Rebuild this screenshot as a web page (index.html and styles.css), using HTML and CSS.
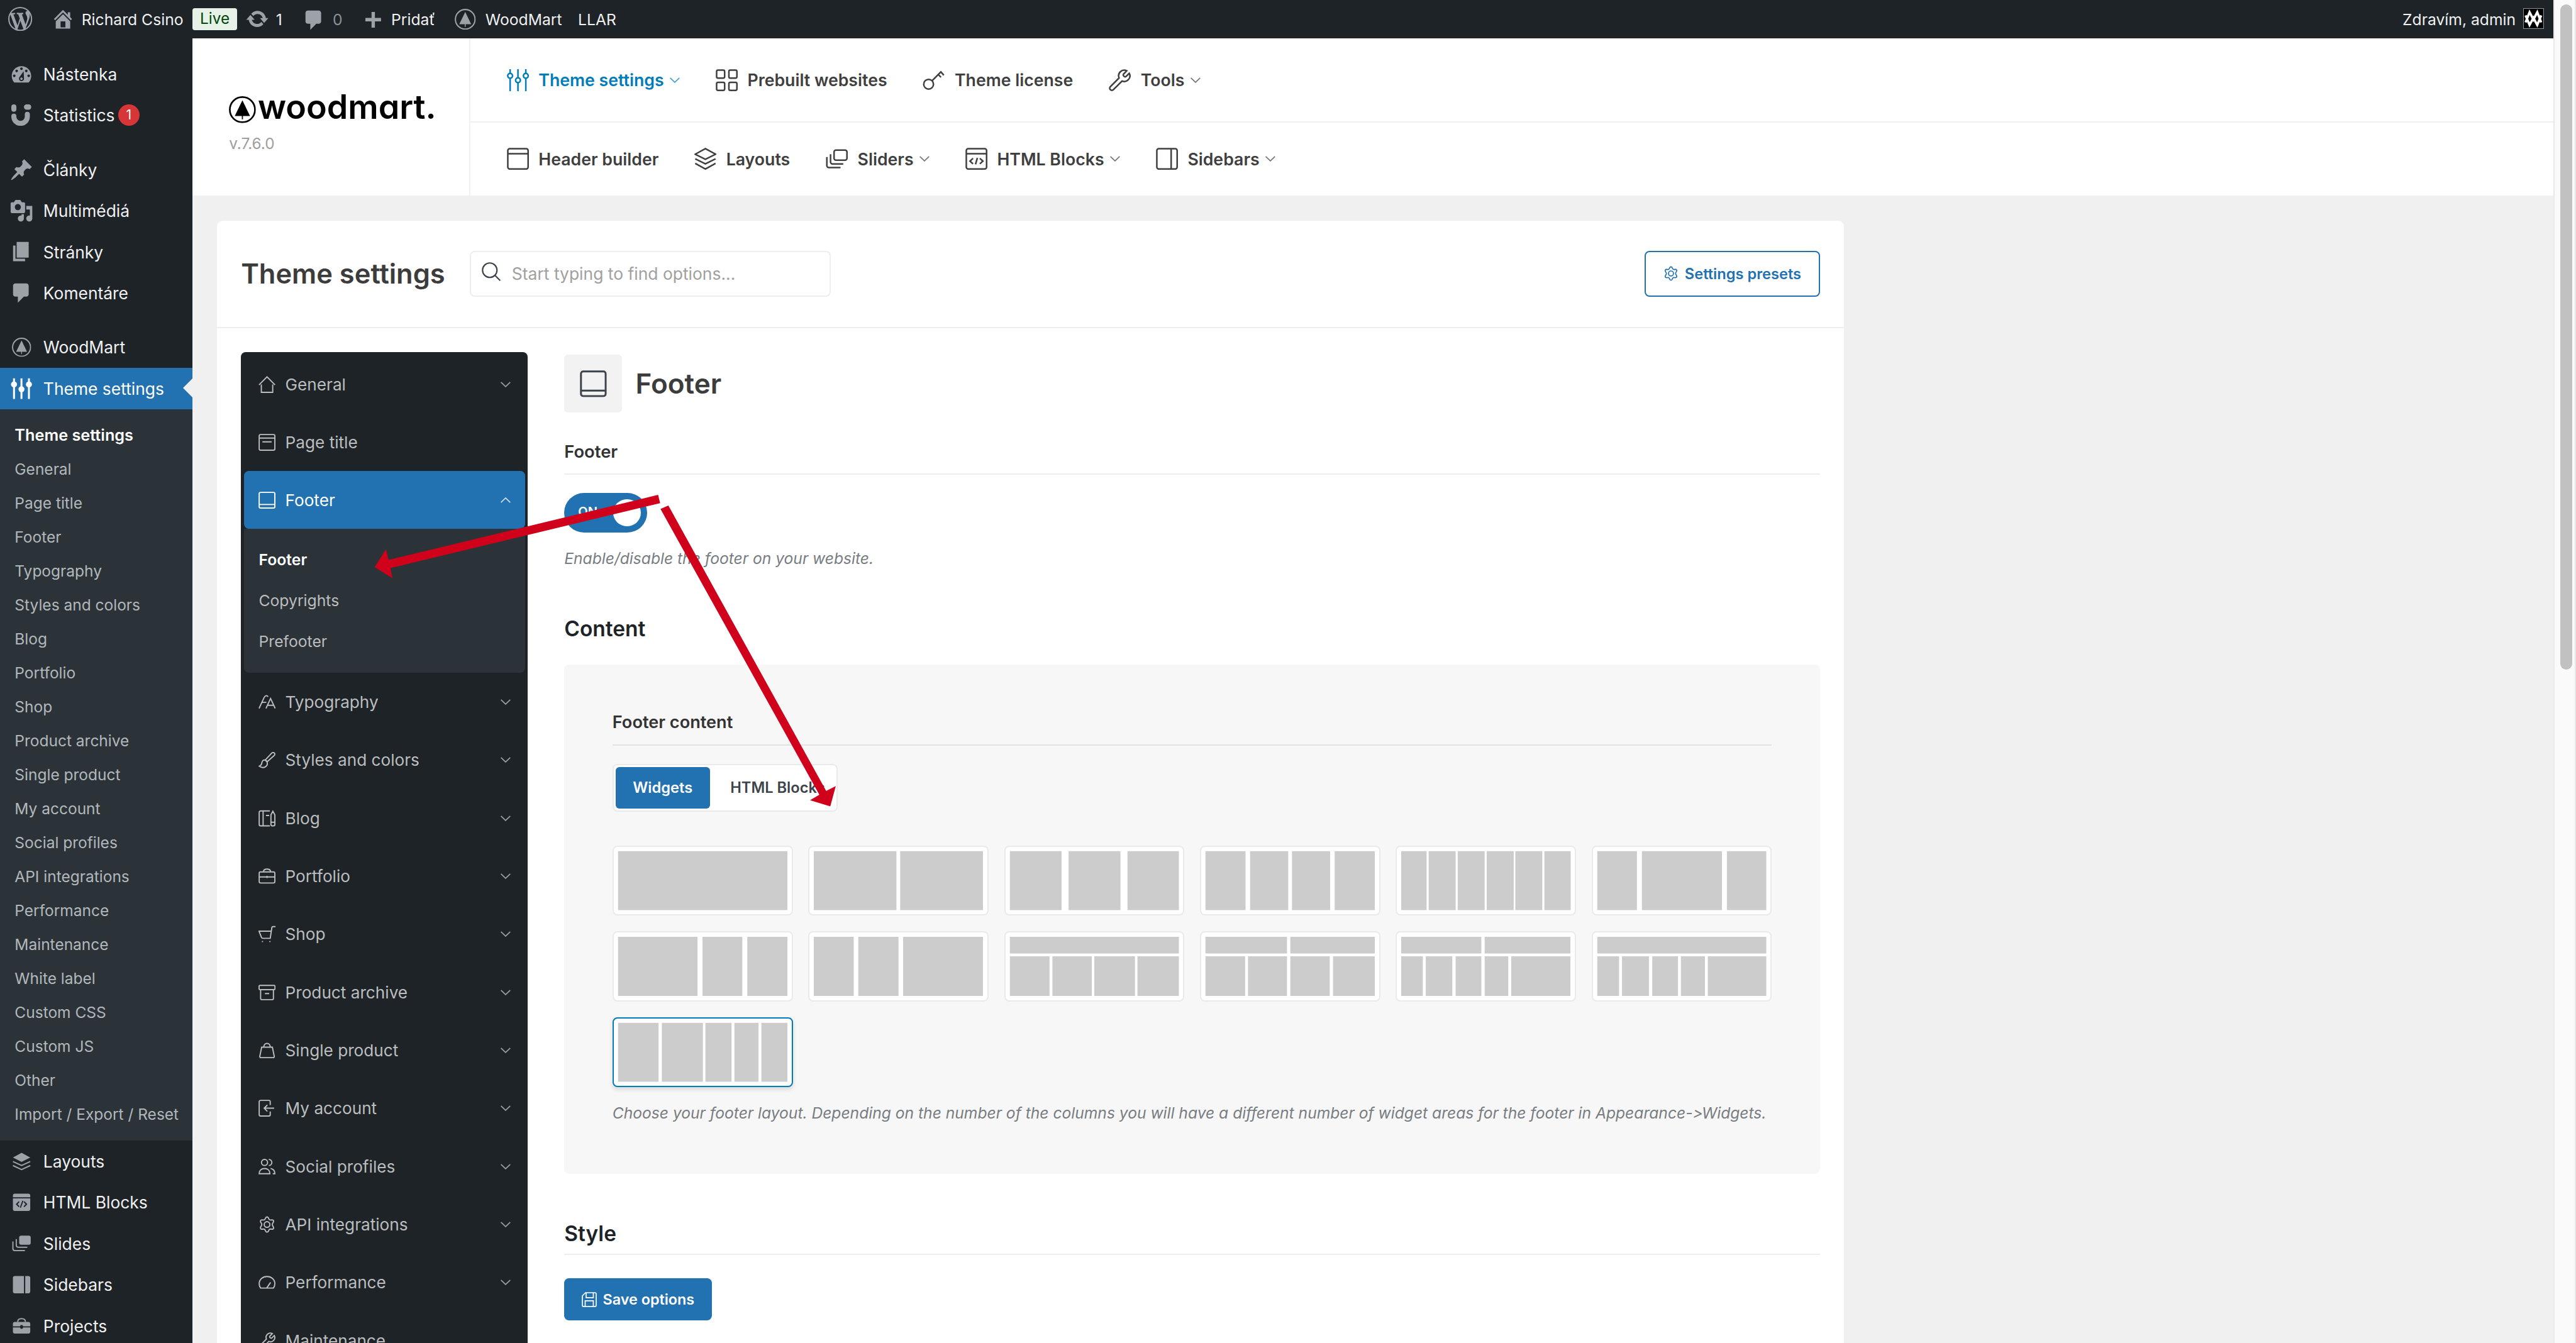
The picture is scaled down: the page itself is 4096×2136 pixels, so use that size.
FILE: index.html
```
<!DOCTYPE html>
<html lang="sk">
<head>
  <meta charset="UTF-8" />
  <meta name="viewport" content="width=device-width, initial-scale=1.0"/>
  <title>Theme settings</title>
  <link rel="stylesheet" href="styles.css">
</head>
<body>
  <!-- icons -->
  <svg class="sprite">
    <symbol id="i-wp" viewBox="0 0 20 20"><path d="M20 10c0-5.51-4.49-10-10-10C4.48 0 0 4.49 0 10c0 5.52 4.48 10 10 10 5.51 0 10-4.48 10-10zM7.78 15.37L4.37 6.22c.55-.02 1.17-.08 1.17-.08.5-.06.44-1.13-.06-1.11 0 0-1.45.11-2.37.11-.18 0-.37 0-.58-.01C4.12 2.69 6.87 1.11 10 1.11c2.33 0 4.45.87 6.05 2.34-.68-.11-1.65.39-1.65 1.58 0 .74.45 1.36.9 2.1.35.61.55 1.36.55 2.46 0 1.49-1.4 5-1.4 5l-3.03-8.37c.54-.02.82-.17.82-.17.5-.05.44-1.25-.06-1.22 0 0-1.44.12-2.38.12-.87 0-2.33-.12-2.33-.12-.5-.03-.56 1.2-.06 1.22l.92.08 1.26 3.41zM17.41 10c.24-.64.74-1.87.43-4.25.7 1.29 1.05 2.71 1.05 4.25 0 3.29-1.73 6.24-4.4 7.78.97-2.59 1.94-5.2 2.92-7.78zM6.1 18.09C3.12 16.65 1.11 13.53 1.11 10c0-1.3.23-2.48.72-3.59C3.25 10.3 4.67 14.2 6.1 18.09zm4.03-6.63l2.58 6.98c-.86.29-1.76.45-2.71.45-.79 0-1.57-.11-2.29-.33.81-2.38 1.62-4.74 2.42-7.1z"/></symbol>
    <symbol id="i-home" viewBox="0 0 20 20"><path d="M16 8.5l1.53 1.53-1.06 1.06L10 4.6l-6.47 6.49-1.06-1.06L10 2.5l4 4v-2h2v4zm-6-2.46l6 5.99V18H4v-5.97zM12 17v-5H8v5h4z"/></symbol>
    <symbol id="i-update" viewBox="0 0 20 20"><path d="M10.2 3.28c3.53 0 6.43 2.61 6.92 6h2.08l-3.5 4-3.5-4h2.32c-.45-1.97-2.21-3.45-4.32-3.45-1.45 0-2.73.71-3.54 1.78L4.95 5.66C6.23 4.2 8.11 3.28 10.2 3.28zm-.4 13.44c-3.52 0-6.43-2.61-6.92-6H.8l3.5-4c1.17 1.33 2.33 2.67 3.5 4H5.48c.45 1.97 2.21 3.45 4.32 3.45 1.45 0 2.73-.71 3.54-1.78l1.71 1.95c-1.28 1.46-3.15 2.38-5.25 2.38z"/></symbol>
    <symbol id="i-comment" viewBox="0 0 20 20"><path d="M5 2h9c1.1 0 2 .9 2 2v7c0 1.1-.9 2-2 2h-2l-5 5v-5H5c-1.1 0-2-.9-2-2V4c0-1.1.9-2 2-2z"/></symbol>
    <symbol id="i-plus" viewBox="0 0 13 13"><path d="M5.1 0h2.8v4.9H13v2.9H7.9V13H5.1V7.8H0V4.9h5.1z"/></symbol>
    <symbol id="i-tree" viewBox="0 0 24 24"><circle cx="12" cy="12" r="11.2" fill="none" stroke="currentColor" stroke-width="1.5"/><path d="M12 3.6l6.8 14h-6.3v3h-1v-3H5.2z"/></symbol>
    <symbol id="i-dashboard" viewBox="0 0 20 20"><path fill-rule="evenodd" d="M4 16.9h12a9 9 0 0 0 2.1-5.4C18.1 6.8 14.5 3.3 10 3.3S1.9 6.8 1.9 11.5A9 9 0 0 0 4 16.9zM10 4.3a1.1 1.1 0 1 1 0 2.2 1.1 1.1 0 0 1 0-2.2zM6 6.1a1.1 1.1 0 1 1 0 2.2 1.1 1.1 0 0 1 0-2.2zM14 6.1a1.1 1.1 0 1 1 0 2.2 1.1 1.1 0 0 1 0-2.2zM4 10.2a1.1 1.1 0 1 1 0 2.2 1.1 1.1 0 0 1 0-2.2zM16 10.2a1.1 1.1 0 1 1 0 2.2 1.1 1.1 0 0 1 0-2.2zM11.800 7.500l.3 5.800a2.100 2.100 0 1 1-3.900-.7zM10 12.700a1 1 0 1 0 0 2 1 1 0 0 0 0-2z"/></symbol>
    <symbol id="i-stats" viewBox="0 0 16.6 18"><rect width="4.2" height="6.2" rx="2.1"/><rect x="10.5" width="6.1" height="4.4" rx="2.2"/><path d="M2.1 9.8v.4a5.600 5.600 0 0 0 11.200 0V8.200" fill="none" stroke="currentColor" stroke-width="4.2" stroke-linecap="round"/></symbol>
    <symbol id="i-pin" viewBox="0 0 20 20"><path d="M10.44 3.02l1.82-1.82 6.36 6.35-1.83 1.82c-1.05-.68-2.48-.57-3.41.36l-.75.75c-.92.93-1.04 2.35-.35 3.41l-1.83 1.82-2.41-2.41-2.8 2.79c-.42.42-3.38 2.71-3.8 2.29s1.86-3.39 2.28-3.81l2.79-2.79L4.1 9.36l1.83-1.82c1.05.69 2.48.57 3.4-.36l.75-.75c.93-.92 1.05-2.35.36-3.41z"/></symbol>
    <symbol id="i-media" viewBox="0 0 20 20"><path d="M13 11V4c0-.55-.45-1-1-1h-1.67L9 1H5L3.67 3H2c-.55 0-1 .45-1 1v7c0 .55.45 1 1 1h10c.55 0 1-.45 1-1zM7 4.5c1.38 0 2.5 1.12 2.5 2.5S8.38 9.5 7 9.5 4.5 8.38 4.5 7 5.62 4.5 7 4.5zM14 6h5v10.5c0 1.38-1.12 2.5-2.5 2.5S14 17.88 14 16.5s1.12-2.5 2.5-2.5c.17 0 .34.02.5.05V9h-3V6zm-4 8.05V13h2v3.5c0 1.38-1.12 2.5-2.5 2.5S7 17.88 7 16.5 8.12 14 9.5 14c.17 0 .34.02.5.05z"/></symbol>
    <symbol id="i-page" viewBox="0 0 20 20"><path d="M6 15V2h10v13H6zm-1 1h8v2H3V5h2v11z"/></symbol>
    <symbol id="i-sliders-fill" viewBox="0 0 20 20"><path d="M3 1.5h1.6v17H3zM9.2 1.5h1.6v17H9.2zM15.4 1.5H17v17h-1.6z"/><circle cx="3.8" cy="6.5" r="2.5"/><circle cx="10" cy="10.5" r="2.5"/><circle cx="16.2" cy="6.5" r="2.5"/></symbol>
    <symbol id="i-layers-fill" viewBox="0 0 20 20"><path d="M10 1l9 4.8-9 4.6-9-4.6z"/><path d="M1 10l9 4.2 9-4.2M1 14.2l9 4.2 9-4.2" fill="none" stroke="currentColor" stroke-width="1.3"/></symbol>
    <symbol id="i-html-fill" viewBox="0 0 20 20"><path fill-rule="evenodd" d="M3 1h14a2 2 0 0 1 2 2v1.8H1V3a2 2 0 0 1 2-2zM1 5.9h18V17a2 2 0 0 1-2 2H3a2 2 0 0 1-2-2zM7 8.8L4 11.9l3 3.1.9-.9-2.1-2.2 2.1-2.2zM13 8.8l-.9.9 2.1 2.2-2.1 2.2.9.9 3-3.1zM10.8 8.2L8.2 15.3l1.1.4 2.6-7.1z"/></symbol>
    <symbol id="i-slides-fill" viewBox="0 0 20 20"><rect x="7.5" y="1.5" width="12" height="9.5" rx="2"/><path d="M4.5 5v6.5a2 2 0 0 0 2 2H16M1 7.5V15a2 2 0 0 0 2 2h10.5" fill="none" stroke="currentColor" stroke-width="1.3"/></symbol>
    <symbol id="i-sidebar-fill" viewBox="0 0 20 20"><path d="M3 1h9.5v18H3a2 2 0 0 1-2-2V3a2 2 0 0 1 2-2zM13.8 1H17a2 2 0 0 1 2 2v14a2 2 0 0 1-2 2h-3.2z"/></symbol>
    <symbol id="i-case-fill" viewBox="0 0 20 20"><path d="M3 5.5h14a2 2 0 0 1 2 2v2.600h-7.500a1.500 1.500 0 0 0-3 0H1V7.500a2 2 0 0 1 2-2zM1 11.200h7.500a1.500 1.500 0 0 0 3 0H19v4.500a2 2 0 0 1-2 2H3a2 2 0 0 1-2-2z"/><path d="M6 5.500c0-2 1.500-3.300 4-3.300s4 1.300 4 3.300" fill="none" stroke="currentColor" stroke-width="1.300"/></symbol>

    <!-- outline icons -->
    <symbol id="o-sliders" viewBox="0 0 24 24"><path d="M3.5 0v4.6M3.5 9.8V24M12 0v9.4M12 14.6V24M20.5 0v4.6M20.5 9.8V24"/><circle cx="3.5" cy="7.2" r="2.6"/><circle cx="12" cy="12" r="2.6"/><circle cx="20.5" cy="7.2" r="2.6"/></symbol>
    <symbol id="o-grid" viewBox="0 0 24 24"><rect x="1" y="1" width="8.7" height="8.7" rx="1.5"/><rect x="14.3" y="1" width="8.7" height="8.7" rx="1.5"/><rect x="1" y="14.3" width="8.7" height="8.7" rx="1.5"/><rect x="14.3" y="14.3" width="8.7" height="8.7" rx="1.5"/></symbol>
    <symbol id="o-key" viewBox="0 0 24 24"><circle cx="6.5" cy="16.3" r="5.3"/><path d="M10.3 12.5L19.8 3l3.2 3.5M17 5.8l2.9 3"/></symbol>
    <symbol id="o-wrench" viewBox="0 0 24 24"><path d="M19.5 1.8a6 6 0 0 0-8.3 7.7L1.7 19a2.3 2.3 0 0 0 3.3 3.3l9.5-9.5a6 6 0 0 0 7.7-8.3l-3.5 3.5a2 2 0 0 1-2.7-2.7z"/></symbol>
    <symbol id="o-header" viewBox="0 0 24 24"><rect x="1" y="1" width="22" height="22" rx="2"/><path d="M1 6.5h22"/></symbol>
    <symbol id="o-layers" viewBox="0 0 24 24"><path d="M12 1l11 6-11 5.5L1 7zM1 12l11 5.5L23 12M1 17l11 6 11-6"/></symbol>
    <symbol id="o-slides" viewBox="0 0 24 24"><rect x="9" y="2.5" width="14" height="11" rx="2"/><path d="M5.2 7v8.5a2 2 0 0 0 2 2H19M1.2 10v9.5a2 2 0 0 0 2 2H16"/></symbol>
    <symbol id="o-html" viewBox="0 0 24 24"><rect x="1" y="1" width="22" height="22" rx="2"/><path d="M1 6.5h22M8.3 11.5l-3.3 3 3.3 3M15.7 11.5l3.3 3-3.3 3M13 11l-2 7"/></symbol>
    <symbol id="o-sidebar" viewBox="0 0 24 24"><rect x="1" y="1" width="22" height="22" rx="2"/><path d="M16.5 1v22"/></symbol>
    <symbol id="o-home" viewBox="0 0 24 24"><path d="M.8 12.5L12 1.2l11.2 11.3M4 12v11h16V12"/></symbol>
    <symbol id="o-title" viewBox="0 0 24 24"><rect x="1" y="1" width="22" height="22" rx="2"/><path d="M1 6h22M5.5 11.2h13"/></symbol>
    <symbol id="o-footer" viewBox="0 0 24 24"><rect x="1" y="1" width="22" height="22" rx="2"/><path d="M1 18h22"/></symbol>
    <symbol id="o-type" viewBox="0 0 24 24"><path d="M.8 21L7.5 6.5C9 3 11.5 2 13.5 4.5M4.5 12.5h6.5M10.5 21l6.5-14 6.5 14M13 16.5h8"/></symbol>
    <symbol id="o-brush" viewBox="0 0 24 24"><path d="M9.5 12.2L18.500 2.500c1.400-1.500 4.500-.8 4.500 1.300 0 .9-.4 1.600-1.100 2.200L12 14.800M9.500 12.200c-2.900-.3-4.500 1.200-4.700 3.600C4.600 18.200 3 20 1 20.800c3 2.200 6.500 2.300 9 .7 2.300-1.500 2.900-4 2-6.700zM9.500 12.200c1.500.4 2.200 1.300 2.500 2.600"/></symbol>
    <symbol id="o-blog" viewBox="0 0 24 24"><path d="M16 1.500H3a2 2 0 0 0-2 2v17a2 2 0 0 0 2 2h13M6.500 1.500v21M10.500 8h4.500M17.500 7L20.200 2 23 7v13.500a2 2 0 0 1-2 2h-1.500a2 2 0 0 1-2-2zM17.500 17.500H23"/></symbol>
    <symbol id="o-case" viewBox="0 0 24 24"><rect x="1" y="6" width="22" height="15.5" rx="2"/><path d="M7 6c0-2.2 1.8-4 5-4s5 1.8 5 4M1 13h22M12 11.5v3"/></symbol>
    <symbol id="o-cart" viewBox="0 0 24 24"><path d="M23.500 1.500h-3.200c-.9 0-1.300.5-1.500 1.400L16.500 18H6.200c-1 0-1.700-.5-2-1.400L.8 8h17.200M5.500 22.500h.2M16 22.500h.2" stroke-linecap="round"/></symbol>
    <symbol id="o-archive" viewBox="0 0 24 24"><rect x=".8" y="2" width="22.4" height="6" rx="1.5"/><path d="M3 8v12a2 2 0 0 0 2 2h14a2 2 0 0 0 2-2V8M9 13.500h6"/></symbol>
    <symbol id="o-bag" viewBox="0 0 24 24"><path d="M4.500 7.500h15l2.700 13a1.500 1.500 0 0 1-1.500 1.700H3.300a1.500 1.500 0 0 1-1.500-1.700zM7.500 7.500c0-3 1.800-5.300 4.500-5.300s4.500 2.300 4.500 5.300"/></symbol>
    <symbol id="o-login" viewBox="0 0 24 24"><path d="M16.500 7.500V3a2 2 0 0 0-2-2H3a2 2 0 0 0-2 2v18a2 2 0 0 0 2 2h11.500a2 2 0 0 0 2-2v-4.500M22 12H8M12.500 7.500L8 12l4.500 4.500"/></symbol>
    <symbol id="o-users" viewBox="0 0 24 24"><circle cx="8.5" cy="6" r="4.3"/><path d="M1 21.800c0-4.500 3-7.300 7.500-7.300s7.500 2.800 7.500 7.300zM14.500 1.700a4.300 4.300 0 0 1 0 8.600M17 14.500c3.700.8 6 3.500 6 7.300h-3"/></symbol>
    <symbol id="o-gear" viewBox="0 0 24 24"><circle cx="12" cy="12" r="4"/><path d="M10.300 2.300a2 2 0 0 1 3.400 0l1.100 2.200c.4.800 1.300 1.200 2.200 1.100l2.300-.2a2 2 0 0 1 1.700 3l-1.300 2.300a2.500 2.500 0 0 0 0 2.600l1.300 2.300a2 2 0 0 1-1.700 3l-2.300-.2c-.9-.1-1.800.3-2.200 1.100l-1.100 2.200a2 2 0 0 1-3.400 0l-1.100-2.200c-.4-.8-1.300-1.200-2.200-1.100l-2.300.2a2 2 0 0 1-1.700-3l1.300-2.300a2.500 2.500 0 0 0 0-2.600L3 8.400a2 2 0 0 1 1.700-3l2.300.2c.9.1 1.800-.3 2.200-1.100z"/></symbol>
    <symbol id="o-gauge" viewBox="0 0 24 24"><path d="M3 20a9.500 9.500 0 0 1-2-6C1 8 5.800 3.800 12 3.800S23 8 23 14c0 2.300-.7 4.300-2 6zM11.500 20l5.500-8"/></symbol>
    <symbol id="o-save" viewBox="0 0 24 24"><path d="M6 1h15a2 2 0 0 1 2 2v18a2 2 0 0 1-2 2H3a2 2 0 0 1-2-2V6zM7 1v8h11.500V1M5.500 23v-9h13v9"/></symbol>
    <symbol id="o-search" viewBox="0 0 24 24"><circle cx="10" cy="10" r="9"/><path d="M16.500 16.500L23 23"/></symbol>
    <symbol id="o-down" viewBox="0 0 16 9"><path d="M.6.8L8 8 15.4.8"/></symbol>
    <symbol id="o-up" viewBox="0 0 16 9"><path d="M.6 8.2L8 1l7.4 7.2"/></symbol>
  </svg>

  <div class="window">
    <div class="app">
      <header class="adminbar">
        <a><svg class="ico"><use href="#i-wp"/></svg></a>
        <a><svg class="ico"><use href="#i-home"/></svg><span>Richard Csino</span></a>
        <a><b class="live">Live</b></a>
        <a><svg class="ico"><use href="#i-update"/></svg><span>1</span></a>
        <a class="muted"><svg class="ico ico-down"><use href="#i-comment"/></svg><span>0</span></a>
        <a><svg class="ico-plus"><use href="#i-plus"/></svg><span>Pridať</span></a>
        <a><svg class="ico-tree"><use href="#i-tree"/></svg><span>WoodMart</span></a>
        <a>LLAR</a>
        <a class="account">Zdravím, admin
          <svg class="avatar" viewBox="0 0 16 16"><rect width="16" height="16" fill="#000"/><path d="M1.5 11.3L4.800 2.800 8 9l3.200-6.200 3.300 8.500M1.500 5.500L4.800 13.500 8 7.500l3.200 6 3.300-8" fill="none" stroke="#fff" stroke-width="1.9"/></svg>
        </a>
      </header>

      <div class="body">
        <nav class="menu">
          <a><svg class="ico"><use href="#i-dashboard"/></svg>Nástenka</a>
          <a><svg class="ico ico-stats"><use href="#i-stats"/></svg>Statistics<b class="count">1</b></a>
          <a class="sep"><svg class="ico"><use href="#i-pin"/></svg>Články</a>
          <a><svg class="ico"><use href="#i-media"/></svg>Multimédiá</a>
          <a><svg class="ico"><use href="#i-page"/></svg>Stránky</a>
          <a><svg class="ico"><use href="#i-comment"/></svg>Komentáre</a>
          <a class="sep"><svg class="ico ico-sm"><use href="#i-tree"/></svg>WoodMart</a>
          <a class="current"><svg class="ico"><use href="#i-sliders-fill"/></svg>Theme settings</a>
          <ul class="submenu">
            <li class="on">Theme settings</li>
            <li>General</li>
            <li>Page title</li>
            <li>Footer</li>
            <li>Typography</li>
            <li>Styles and colors</li>
            <li>Blog</li>
            <li>Portfolio</li>
            <li>Shop</li>
            <li>Product archive</li>
            <li>Single product</li>
            <li>My account</li>
            <li>Social profiles</li>
            <li>API integrations</li>
            <li>Performance</li>
            <li>Maintenance</li>
            <li>White label</li>
            <li>Custom CSS</li>
            <li>Custom JS</li>
            <li>Other</li>
            <li>Import / Export / Reset</li>
          </ul>
          <a><svg class="ico ico-sm"><use href="#i-layers-fill"/></svg>Layouts</a>
          <a><svg class="ico ico-sm"><use href="#i-html-fill"/></svg>HTML Blocks</a>
          <a><svg class="ico ico-sm"><use href="#i-slides-fill"/></svg>Slides</a>
          <a><svg class="ico ico-sm"><use href="#i-sidebar-fill"/></svg>Sidebars</a>
          <a><svg class="ico ico-sm"><use href="#i-case-fill"/></svg>Projects</a>
        </nav>

        <div class="main">
          <div class="topnav">
            <div class="brand">
              <div class="logo"><svg><use href="#i-tree"/></svg><span>woodmart.</span></div>
              <div class="version">v.7.6.0</div>
            </div>
            <div class="links">
              <div class="row">
                <a class="on"><svg class="line"><use href="#o-sliders"/></svg>Theme settings<svg class="chev"><use href="#o-down"/></svg></a>
                <a><svg class="line"><use href="#o-grid"/></svg>Prebuilt websites</a>
                <a><svg class="line"><use href="#o-key"/></svg>Theme license</a>
                <a><svg class="line"><use href="#o-wrench"/></svg>Tools<svg class="chev"><use href="#o-down"/></svg></a>
              </div>
              <div class="row">
                <a><svg class="line"><use href="#o-header"/></svg>Header builder</a>
                <a><svg class="line"><use href="#o-layers"/></svg>Layouts</a>
                <a><svg class="line"><use href="#o-slides"/></svg>Sliders<svg class="chev"><use href="#o-down"/></svg></a>
                <a><svg class="line"><use href="#o-html"/></svg>HTML Blocks<svg class="chev"><use href="#o-down"/></svg></a>
                <a><svg class="line"><use href="#o-sidebar"/></svg>Sidebars<svg class="chev"><use href="#o-down"/></svg></a>
              </div>
            </div>
          </div>

          <div class="panel">
            <div class="panel-head">
              <h1>Theme settings</h1>
              <div class="search"><svg class="line"><use href="#o-search"/></svg>Start typing to find options...</div>
              <a class="presets"><svg class="line"><use href="#o-gear"/></svg>Settings presets</a>
            </div>
            <div class="panel-body">
              <nav class="sections">
                <a><svg class="line"><use href="#o-home"/></svg>General<svg class="chev"><use href="#o-down"/></svg></a>
                <a><svg class="line"><use href="#o-title"/></svg>Page title</a>
                <a class="on"><svg class="line"><use href="#o-footer"/></svg>Footer<svg class="chev"><use href="#o-up"/></svg></a>
                <ul>
                  <li class="on">Footer</li>
                  <li>Copyrights</li>
                  <li>Prefooter</li>
                </ul>
                <a><svg class="line"><use href="#o-type"/></svg>Typography<svg class="chev"><use href="#o-down"/></svg></a>
                <a><svg class="line"><use href="#o-brush"/></svg>Styles and colors<svg class="chev"><use href="#o-down"/></svg></a>
                <a><svg class="line"><use href="#o-blog"/></svg>Blog<svg class="chev"><use href="#o-down"/></svg></a>
                <a><svg class="line"><use href="#o-case"/></svg>Portfolio<svg class="chev"><use href="#o-down"/></svg></a>
                <a><svg class="line"><use href="#o-cart"/></svg>Shop<svg class="chev"><use href="#o-down"/></svg></a>
                <a><svg class="line"><use href="#o-archive"/></svg>Product archive<svg class="chev"><use href="#o-down"/></svg></a>
                <a><svg class="line"><use href="#o-bag"/></svg>Single product<svg class="chev"><use href="#o-down"/></svg></a>
                <a><svg class="line"><use href="#o-login"/></svg>My account<svg class="chev"><use href="#o-down"/></svg></a>
                <a><svg class="line"><use href="#o-users"/></svg>Social profiles<svg class="chev"><use href="#o-down"/></svg></a>
                <a><svg class="line"><use href="#o-gear"/></svg>API integrations<svg class="chev"><use href="#o-down"/></svg></a>
                <a><svg class="line"><use href="#o-gauge"/></svg>Performance<svg class="chev"><use href="#o-down"/></svg></a>
                <a><svg class="line"><use href="#o-wrench"/></svg>Maintenance</a>
              </nav>

              <div class="content">
                <div class="content-head">
                  <div class="tile"><svg class="line"><use href="#o-footer"/></svg></div>
                  <h2>Footer</h2>
                </div>
                <h4>Footer</h4>
                <div class="toggle"><span>ON</span><i></i></div>
                <p class="help">Enable/disable the footer on your website.</p>

                <h3>Content</h3>
                <div class="group">
                  <h4>Footer content</h4>
                  <div class="tabs"><a class="on">Widgets</a><a>HTML Blocks</a></div>
                  <div class="cards">
                    <svg class="card" viewBox="0 0 409 151" preserveAspectRatio="none"><rect width="409" height="151"/></svg>
                    <svg class="card" viewBox="0 0 409 151" preserveAspectRatio="none"><rect width="200" height="151"/><rect x="209" width="200" height="151"/></svg>
                    <svg class="card" viewBox="0 0 409 151" preserveAspectRatio="none"><rect width="125" height="151"/><rect x="142" width="125" height="151"/><rect x="284" width="125" height="151"/></svg>
                    <svg class="card" viewBox="0 0 409 151" preserveAspectRatio="none"><rect width="97" height="151"/><rect x="108" width="92" height="151"/><rect x="209" width="92" height="151"/><rect x="312" width="97" height="151"/></svg>
                    <svg class="card" viewBox="0 0 409 151" preserveAspectRatio="none"><rect x="-2" width="64" height="151"/><rect x="67" width="65" height="151"/><rect x="137" width="65" height="151"/><rect x="207" width="65" height="151"/><rect x="276" width="65" height="151"/><rect x="346" width="65" height="151"/></svg>
                    <svg class="card" viewBox="0 0 409 151" preserveAspectRatio="none"><rect width="96" height="151"/><rect x="108" width="193" height="151"/><rect x="313" width="96" height="151"/></svg>
                    <svg class="card" viewBox="0 0 409 151" preserveAspectRatio="none"><rect width="192" height="151"/><rect x="204" width="96" height="151"/><rect x="312" width="97" height="151"/></svg>
                    <svg class="card" viewBox="0 0 409 151" preserveAspectRatio="none"><rect width="97" height="151"/><rect x="108" width="97" height="151"/><rect x="216" width="193" height="151"/></svg>
                    <svg class="card" viewBox="0 0 409 151" preserveAspectRatio="none"><rect width="409" height="43"/><rect y="50" width="96" height="101"/><rect x="103" y="50" width="95" height="101"/><rect x="204" y="50" width="98" height="101"/><rect x="308" y="50" width="101" height="101"/></svg>
                    <svg class="card" viewBox="0 0 409 151" preserveAspectRatio="none"><rect width="197" height="43"/><rect x="205" width="204" height="43"/><rect y="50" width="96" height="101"/><rect x="103" y="50" width="94" height="101"/><rect x="205" y="50" width="95" height="101"/><rect x="308" y="50" width="101" height="101"/></svg>
                    <svg class="card" viewBox="0 0 409 151" preserveAspectRatio="none"><rect width="194" height="43"/><rect x="202" width="207" height="43"/><rect y="50" width="53" height="101"/><rect x="60" y="50" width="64" height="101"/><rect x="132" y="50" width="62" height="101"/><rect x="202" y="50" width="57" height="101"/><rect x="266" y="50" width="143" height="101"/></svg>
                    <svg class="card" viewBox="0 0 409 151" preserveAspectRatio="none"><rect width="409" height="43"/><rect y="50" width="53" height="101"/><rect x="60" y="50" width="65" height="101"/><rect x="133" y="50" width="62" height="101"/><rect x="202" y="50" width="58" height="101"/><rect x="267" y="50" width="142" height="101"/></svg>
                    <svg class="card on" viewBox="0 0 409 151" preserveAspectRatio="none"><rect width="98" height="151"/><rect x="106" width="99" height="151"/><rect x="211" width="63" height="151"/><rect x="281" width="58" height="151"/><rect x="346" width="63" height="151"/></svg>
                  </div>
                  <p class="help">Choose your footer layout. Depending on the number of the columns you will have a different number of widget areas for the footer in Appearance-&gt;Widgets.</p>
                </div>

                <h3 class="ruled">Style</h3>
                <a class="save"><svg class="line"><use href="#o-save"/></svg>Save options</a>
              </div>
            </div>
          </div>
        </div>
      </div>
    </div>
    <div class="scrollbar"><div class="thumb"></div></div>
  </div>

  <!-- annotation arrows -->
  <svg class="arrows" viewBox="0 0 7524 3924">
    <path d="M1922 1446L1928 1470 1140 1660 1146 1689 1094 1657 1127 1605 1135 1636z"/>
    <path d="M1952 1477L1929 1487 2393 2322 2366 2338 2425 2356 2441 2297 2413 2311z"/>
  </svg>
</body>
</html>
```
FILE: styles.css
```
/* 1rem = 10 admin pixels */
html {
  font-size: 19.14px;
}

* {
  box-sizing: border-box;
}

body {
  margin: 0;
  height: 100vh;
  overflow: hidden;
  position: relative;
  background: #f0f0f1;
  font-family: Inter, "Open Sans", sans-serif;
  font-size: 1.38rem;
  font-feature-settings: "calt" 0;
}

h1, h2, h3, h4, p, ul {
  margin: 0;
  padding: 0;
  list-style: none;
}

svg {
  flex: none;
  display: block;
  fill: currentColor;
}

.sprite {
  position: absolute;
  width: 0;
  height: 0;
}

.line, .chev {
  fill: none;
  stroke: currentColor;
  stroke-width: 1.7;
  overflow: visible;
}

.chev {
  width: .83rem;
  height: .47rem;
}

.window {
  display: flex;
  height: 100vh;
}

.app {
  flex: 1;
  display: flex;
  flex-direction: column;
  min-width: 0;
}

/* admin bar */
.adminbar {
  flex: none;
  display: grid;
  grid-template-columns: 3.53rem 11.77rem 4.38rem 4.68rem 5.31rem 7.43rem 10.22rem 1fr auto;
  height: 3.2rem;
  padding-left: .7rem;
  background: #1d2327;
  color: #f0f0f1;
  font-size: 1.29rem;
}

.adminbar a {
  display: flex;
  align-items: center;
}

.adminbar svg {
  color: #9ca2a7;
}

.adminbar span {
  margin-left: .55rem;
}

.ico {
  width: 2rem;
  height: 2rem;
}

.ico-down {
  margin-top: .2rem;
}

.ico-plus {
  width: 1.3rem;
  height: 1.3rem;
  margin-top: .1rem;
}

.ico-plus + span {
  margin-left: .83rem;
}

.ico-tree {
  width: 1.75rem;
  height: 1.75rem;
}

.ico-tree + span {
  margin-left: .78rem;
}

.muted span {
  margin-left: .58rem;
  color: #8c9196;
}

.live {
  padding: 0 .62rem;
  height: 1.83rem;
  line-height: 1.75rem;
  border-radius: .2rem;
  background: #e6f2e8;
  color: #00450c;
  font-weight: 400;
  font-size: 1.27rem;
}

.avatar {
  width: 1.7rem;
  height: 1.7rem;
  margin: -.1rem .82rem 0 .62rem;
  border: 1px solid #8c8f94;
}

.body {
  flex: 1;
  display: flex;
  min-height: 0;
}

/* admin menu */
.menu {
  flex: none;
  width: 16rem;
  padding-top: 1.24rem;
  background: #1d2327;
  color: #f0f0f1;
  overflow: hidden;
}

.menu a {
  display: flex;
  align-items: center;
  height: 3.42rem;
  padding-left: .8rem;
  position: relative;
}

.menu .ico {
  margin-right: .8rem;
  color: #9ca2a7;
}

.menu .ico-sm {
  width: 1.6rem;
  height: 1.6rem;
  margin-left: .2rem;
  margin-right: 1rem;
}

.menu .ico-stats {
  width: 1.66rem;
  height: 1.8rem;
  margin-left: .15rem;
  margin-right: .99rem;
}

.menu .sep {
  margin-top: 1.1rem;
}

.menu .current {
  background: #2271b1;
  color: #fff;
}

.menu .current .ico {
  color: #fff;
}

.current::after {
  content: "";
  position: absolute;
  right: 0;
  top: .9rem;
  border: .8rem solid transparent;
  border-left: 0;
  border-right-color: #f0f0f1;
}

.count {
  width: 1.8rem;
  margin-left: .27rem;
  border-radius: 50%;
  background: #d63638;
  color: #fff;
  font-size: 1.1rem;
  font-weight: 400;
  line-height: 1.8rem;
  text-align: center;
}

.submenu {
  padding: .75rem 0 .78rem 1.22rem;
  background: #2c3338;
  color: #b1b8bc;
  font-size: 1.28rem;
  line-height: 2.822rem;
}

.submenu .on {
  color: #fff;
  font-size: 1.32rem;
  font-weight: 600;
}

/* theme top navigation */
.main {
  flex: 1;
  min-width: 0;
  display: flex;
  flex-direction: column;
  background: #f0f0f1;
}

.topnav {
  flex: none;
  display: flex;
  height: 13.03rem;
  background: #fff;
}

.brand {
  width: 23.07rem;
  padding: 4.82rem 0 0 3.03rem;
  border-right: 2px solid #f2f2f2;
}

.logo {
  display: flex;
  align-items: center;
  height: 2.24rem;
  color: #000;
}

.logo svg {
  width: 2.24rem;
  height: 2.24rem;
}

.logo span {
  margin: -.58rem 0 0 .15rem;
  font-size: 2.81rem;
  font-weight: 600;
  font-feature-settings: "cv11";
}

.version {
  margin-top: .79rem;
  color: #9e9e9e;
  font-size: 1.27rem;
  line-height: 1.8rem;
}

.links {
  flex: 1;
}

.row {
  display: flex;
  align-items: center;
  gap: 2.97rem;
  height: 6.03rem;
  padding-left: 3.03rem;
  color: #3f3f3f;
  font-size: 1.395rem;
  font-weight: 600;
}

.row:first-child {
  height: 7rem;
  border-bottom: 2px solid #f0f0f0;
}

.row a {
  display: flex;
  align-items: center;
}

.row .line {
  width: 1.84rem;
  height: 1.84rem;
  margin-right: .8rem;
}

.row .chev {
  margin-left: .5rem;
  opacity: .7;
}

.row .on {
  color: #007cba;
}

/* panel */
.panel {
  flex: 1;
  width: 135.18rem;
  margin: 2.11rem 0 0 2.02rem;
  border-radius: .5rem .5rem 0 0;
  background: #fff;
}

.panel-head {
  display: flex;
  align-items: center;
  height: 8.93rem;
  padding: 0 2rem;
  border-bottom: 2px solid #eee;
}

h1 {
  width: 19rem;
  color: #3c3c3c;
  font-size: 2.27rem;
  font-weight: 600;
}

.search {
  display: flex;
  align-items: center;
  width: 30rem;
  height: 3.8rem;
  padding-left: .9rem;
  border: 2px solid #eee;
  border-radius: .4rem;
  color: #a0a0a0;
  font-size: 1.382rem;
}

.search .line {
  width: 1.6rem;
  height: 1.6rem;
  margin: -.3rem .9rem 0 0;
  color: #3c434a;
}

.presets {
  display: flex;
  align-items: center;
  justify-content: center;
  width: 14.55rem;
  height: 3.82rem;
  margin-left: auto;
  border: 2px solid #2271b1;
  border-radius: .4rem;
  color: #2271b1;
  font-size: 1.235rem;
  font-weight: 600;
}

.presets .line, .save .line {
  width: 1.25rem;
  height: 1.25rem;
  margin-right: .5rem;
}

.panel-body {
  display: flex;
  padding: 1.98rem 2rem 0;
}

/* dark section list */
.sections {
  flex: none;
  width: 23.84rem;
  height: 86rem;
  padding: .24rem;
  border-radius: .4rem;
  background: #1d2327;
  color: #bbbdbe;
  font-size: 1.368rem;
}

.sections a {
  display: flex;
  align-items: center;
  height: 4.824rem;
  padding: .06rem 1.2rem 0;
  border-radius: .4rem;
}

.sections .line {
  width: 1.42rem;
  height: 1.42rem;
  margin-right: .82rem;
}

.sections .chev {
  margin-left: auto;
  opacity: .8;
}

.sections a.on {
  background: #2271b1;
  color: #fff;
}

.sections ul {
  padding: .88rem 0 .86rem 1.24rem;
  border-radius: 0 0 .4rem .4rem;
  background: #2c3338;
  font-size: 1.292rem;
  line-height: 3.4rem;
}

.sections li.on {
  color: #fff;
  font-weight: 600;
}

/* settings */
.content {
  flex: 1;
  margin-left: 3.02rem;
  padding-top: .22rem;
}

.content-head {
  display: flex;
  align-items: center;
  height: 4.8rem;
}

.tile {
  display: flex;
  align-items: center;
  justify-content: center;
  width: 4.8rem;
  height: 4.8rem;
  border-radius: .3rem;
  background: #f2f2f2;
  color: #3c434a;
}

.tile .line {
  width: 2.24rem;
  height: 2.24rem;
}

h2 {
  margin-left: 1.12rem;
  color: #3c3c3c;
  font-size: 2.3rem;
  font-weight: 600;
}

h3 {
  margin-top: 3.8rem;
  color: #1d2327;
  font-size: 1.75rem;
  font-weight: 600;
  line-height: 2.4rem;
}

h4 {
  margin-top: 2.26rem;
  padding-bottom: .84rem;
  border-bottom: 2px solid #eee;
  color: #333;
  font-size: 1.43rem;
  font-weight: 600;
  line-height: 2rem;
}

.toggle {
  display: flex;
  align-items: center;
  justify-content: space-between;
  width: 6.86rem;
  height: 3.27rem;
  margin-top: 1.5rem;
  padding: 0 .52rem 0 1.15rem;
  border-radius: 1.65rem;
  background: #2271b1;
  color: #fff;
  font-size: 1.05rem;
  font-weight: 600;
}

.toggle span {
  margin-top: -.1rem;
}

.toggle i {
  width: 2.26rem;
  height: 2.26rem;
  border-radius: 50%;
  background: #fff;
}

.help {
  margin-top: 1.26rem;
  color: #777d82;
  font-size: 1.286rem;
  font-style: italic;
  line-height: 1.8rem;
  white-space: nowrap;
}

.group {
  height: 42.35rem;
  margin-top: 1.72rem;
  padding: 3.81rem 4rem 0;
  border-radius: .4rem;
  background: #f7f7f7;
}

.group h4 {
  margin: 0;
  border-color: #e2e2e2;
  font-size: 1.418rem;
}

.tabs {
  display: inline-flex;
  height: 3.97rem;
  margin-top: 1.5rem;
  padding: .15rem;
  border: 2px solid #eaeaea;
  border-radius: .4rem;
  background: #fff;
  color: #3c434a;
  font-size: 1.235rem;
  font-weight: 600;
  line-height: 3.5rem;
  vertical-align: top;
}

.tabs a {
  width: 7.84rem;
  text-align: center;
  border-radius: .3rem;
}

.tabs a + a {
  width: 10.36rem;
  padding-left: 1.7rem;
  text-align: left;
}

.tabs .on {
  background: #2271b1;
  color: #fff;
}

.cards {
  display: grid;
  grid-template-columns: repeat(6, 14.98rem);
  justify-content: space-between;
  gap: 1.29rem 0;
  margin-top: 2.81rem;
}

.card {
  width: 100%;
  height: 5.84rem;
  padding: .34rem .34rem;
  border: 2px solid #eaeaea;
  border-radius: .4rem;
  background: #fff;
  color: #ccc;
}

.card.on {
  border-color: #007cba;
  box-shadow: 0 .2rem .4rem rgba(0, 0, 0, .12);
}

.ruled {
  padding-bottom: .41rem;
  border-bottom: 2px solid #eee;
}

.save {
  display: flex;
  align-items: center;
  justify-content: center;
  width: 12.26rem;
  height: 3.49rem;
  margin-top: 1.96rem;
  border-radius: .4rem;
  background: #2271b1;
  color: #fff;
  font-size: 1.22rem;
  font-weight: 600;
}

.scrollbar {
  flex: none;
  width: 1.87rem;
  padding: .36rem 0 0 .45rem;
  border: solid #e8e8e8;
  border-width: 0 2px;
  background: #fafafa;
}

.thumb {
  width: .98rem;
  height: 55.3rem;
  border-radius: .5rem;
  background: #c1c1c1;
}

.arrows {
  position: absolute;
  top: 0;
  left: 0;
  width: 100%;
  height: 100%;
  color: #d0021b;
  pointer-events: none;
}
```
